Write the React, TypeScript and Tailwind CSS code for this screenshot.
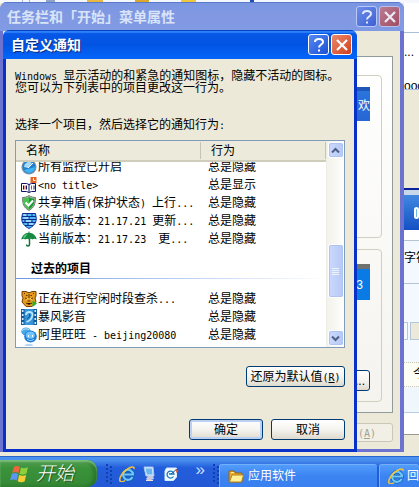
import React from "react";

const cjk = "font-['Liberation_Sans','Noto_Sans_CJK_SC',sans-serif]";

/* Half-width face; a zero line height keeps it from stretching its line. */
const halfWidth = "whitespace-pre font-['DejaVu_Sans_Mono','Liberation_Mono',monospace] text-[10px] leading-[0]";

/* Sets Latin runs in the half-width face beside the full-width Chinese glyphs. */
function Mix({ children }: { children: string }) {
  const parts = children.split(/([\x20-\x7e]+)/).filter(Boolean);
  return (
    <>
      {parts.map((part, i) =>
        /^[\x20-\x7e]+$/.test(part) ? (
          <span key={i} className={halfWidth}>
            {part}
          </span>
        ) : (
          <span key={i}>{part}</span>
        ),
      )}
    </>
  );
}

const svg = "block h-4 w-4 shrink-0";

function MonitorIcon() {
  return (
    <svg viewBox="0 0 16 16" className={svg} aria-hidden="true">
      <circle cx="8" cy="8" r="7.6" fill="#8b949c" />
      <circle cx="8" cy="8" r="6.4" fill="#1f7fd0" />
      <path d="M8 14a6 6 0 0 0 6-6L3 11a6 6 0 0 0 5 3Z" fill="#3fb4f4" />
      <path d="M3 8a5 5 0 0 1 8-4L7 9Z" fill="#a8dcff" />
      <path d="M7 9l5-5" stroke="#fff" />
    </svg>
  );
}

function BookIcon() {
  return (
    <svg viewBox="0 0 16 16" className={svg} aria-hidden="true">
      <path d="M.5 6.500h5l2.500 1 2.500-1h4v8h-4l-2.500 1-2.500-1h-5Z" fill="#fff" stroke="#10106c" />
      <path d="M8 7v8M2.500 8.500v4M5.500 8.500v4M13 8.500v4" stroke="#10106c" />
      <path d="M4 8.500v4M10.500 8.500v4" stroke="#d04020" />
      <path d="M9.500 0h6v6h-6z" fill="#e8641c" />
      <path d="M12.500 1v2.500h2" stroke="#fff" fill="none" />
    </svg>
  );
}

function ShieldIcon() {
  return (
    <svg viewBox="0 0 16 16" className={svg} aria-hidden="true">
      <path d="M8 .5C10 2 12.500 2.500 14.500 2.500c0 6-1 10-6.500 13-5.500-3-6.500-7-6.500-13C3.500 2.500 6 2 8 .5Z" fill="#b4bdb0" stroke="#6b7c68" />
      <path d="M8 2c1.500 1 3.500 1.500 5.500 1.500 0 5.500-1.500 8.500-5.500 11-4-2.500-5.500-5.500-5.500-11C4.500 3.500 6.500 3 8 2Z" fill="#1d9c32" />
      <path d="M8 2v12.500C4 12 2.500 9 2.500 3.500 4.500 3.500 6.500 3 8 2Z" fill="#4cc254" />
      <path d="m4.500 7.500 3 3 4.500-5" stroke="#fff" strokeWidth="2" fill="none" />
    </svg>
  );
}

function BrickShieldIcon() {
  return (
    <svg viewBox="0 0 16 16" className={svg} aria-hidden="true">
      <path d="M1.500.5h13l.8 5c0 5-3.300 8-7.300 10-4-2-7.300-5-7.300-10Z" fill="#50baf6" stroke="#0c2c94" />
      <path d="M1 3.500h14M1 6.500h14M1.500 9.500h13M4 12.500h8M6 .5v3M11 .5v3M8 3.500v3M4 6.500v3M11 6.500v3M7 9.500v3" stroke="#0c2c94" />
      <path d="M2.500 2h3M2.500 5h5M5 8h5M8 11h4" stroke="#e4f6ff" />
    </svg>
  );
}

function UmbrellaIcon() {
  return (
    <svg viewBox="0 0 16 16" className={svg} aria-hidden="true">
      <path d="M.3 8.500C1 4.500 4 2 7.500 1.800V.5h1v1.300C12 2 15 4.500 15.700 8.500c-2-1.200-3-1-4 0-1.500-1-2.500-1-3.700 0-1.200-1-2.200-1-3.700 0-1-1-2-1.200-4 0Z" fill="#178a42" />
      <path d="M2 6.500C3 4 5 3 7 3 5.500 4 4.500 5.500 4 7Z" fill="#65cc7c" />
      <path d="M8.500 8v5.500c0 2-3 2-3 0" stroke="#147038" strokeWidth="1.500" fill="none" />
    </svg>
  );
}

function LeopardIcon() {
  return (
    <svg viewBox="0 0 16 16" className={svg} aria-hidden="true">
      <path d="M1 .5h4l2 1h2l2-1h4V5l-1 2 1 4-4 4.500H5L1 11l1-4-1-2Z" fill="#e49a1c" stroke="#754008" />
      <path d="M5 4.500h1.500M9.500 4.500H11M4 7l2 1M12 7l-2 1M6.500 10h3M5 12l3 1.500 3-1.500M3 2.500h1M12 2.500h1M8 3v4" stroke="#653404" />
      <path d="M5 9.500 7 7M9 7l2 2.500" stroke="#ffe070" />
      <path d="m11.500 9.500 4.500 3-4.500 3.500Z" fill="#28b428" />
    </svg>
  );
}

function FilmIcon() {
  return (
    <svg viewBox="0 0 16 16" className={svg} aria-hidden="true">
      <path d="M0 0h16v16H0z" fill="#135c9c" />
      <path d="M3.500 0h9v16h-9z" fill="#3694d8" />
      <path d="M1.700 1v14M14.300 1v14" stroke="#d4ecff" strokeWidth="1.600" strokeDasharray="2 2" />
      <path d="M5 6c0-4 7-4 6.500 0-.5 4-3 6-6 7" stroke="#b8eaff" strokeWidth="1.800" fill="none" />
      <path d="M8 5c2 1 0 4-2 5" stroke="#0c3c78" fill="none" />
    </svg>
  );
}

function WangWangIcon() {
  return (
    <svg viewBox="0 0 16 16" className={svg} aria-hidden="true">
      <ellipse cx="5" cy="4.500" rx="4.800" ry="4" fill="#4ba8e8" />
      <path d="M1 4c1-2 5-3 7-1" stroke="#c4ecff" fill="none" />
      <ellipse cx="9.500" cy="9.500" rx="6.300" ry="6" fill="#1c7cd8" />
      <ellipse cx="9.300" cy="8.200" rx="4.500" ry="3.600" fill="#70c4fa" />
      <path d="M7.500 8v2M11.500 8v2" stroke="#fff" />
      <path d="M6 12c2 2 5 2 7 0" stroke="#b4e4ff" fill="none" />
    </svg>
  );
}

function ExplorerIcon() {
  return (
    <svg viewBox="0 0 16 16" className={svg} aria-hidden="true">
      <path d="M13.500 11A5 5 0 1 1 14 8.500H5" stroke="#0e59ac" strokeWidth="3.400" fill="none" />
      <path d="M13.500 11A5 5 0 1 1 14 8.500H5" stroke="#6cc8f8" strokeWidth="2.200" fill="none" />
      <path d="M1.500 15.500C-1 13 4 4 12 1.200c2-.7 3.500-.2 3 1.800M1.500 15.500c1 .6 3 0 4.500-1" stroke="#f2c43c" strokeWidth="1.500" fill="none" />
    </svg>
  );
}

function DesktopIcon() {
  return (
    <svg viewBox="0 0 16 16" className={svg} aria-hidden="true">
      <path d="M3 1h9l1 9H5Z" fill="#dcecff" stroke="#a4c8f4" />
      <path d="M4.500 2.500h6.500l.5 6H6Z" fill="#6cb4f0" />
      <path d="M7 10h5l1 3-6 2-2-2Z" fill="#c9c8dc" />
      <path d="M5 14.500h7" stroke="#eee6d4" />
    </svg>
  );
}

function MailIcon() {
  return (
    <svg viewBox="0 0 16 16" className={svg} aria-hidden="true">
      <path d="M3.500 2h10v9l-3 3.500H2V5Z" fill="#f4fbff" stroke="#d4effc" />
      <path d="M10.500 10.500A3.500 3.500 0 1 1 11 8H6" stroke="#1679b8" strokeWidth="1.300" fill="none" />
      <path d="m8 8 6-5" stroke="#2458a0" />
      <path d="m12.500 3 3 2-2 2Z" fill="#e85c24" />
    </svg>
  );
}

function FolderIcon() {
  return (
    <svg viewBox="0 0 16 16" className={svg} aria-hidden="true">
      <path d="M1 3h5l1.500 2H14v9H1Z" fill="#e6aa2c" stroke="#946410" />
      <path d="M4 7h11.500L13.500 14H1.500Z" fill="#fff09a" stroke="#b68220" />
      <path d="M3 4.500h3" stroke="#fff0a4" />
    </svg>
  );
}

function FlagIcon() {
  return (
    <svg viewBox="0 0 20 18" className="block h-[18px] w-5 shrink-0" aria-hidden="true">
      <path d="M4 2c2-1.500 4-1 6 0L8.500 8c-2-1-4-1.500-6.500 0Z" fill="#f0643c" />
      <path d="M11 2.500c2 1 5 1 7-.5l-1.500 6.500c-2 1.500-5 1.500-7 .2Z" fill="#8cd03c" />
      <path d="M1.700 9c2-1.500 4-1.200 6.500 0L6.700 15.500c-2-1.200-4-1.500-6.700 0Z" fill="#5c96f4" />
      <path d="M9.200 9.700c2 1.300 5 1.300 7 0l-1.500 6.500c-2 1.500-5 1.200-7 0Z" fill="#f8cc34" />
    </svg>
  );
}

function HelpButton({ faded = false }: { faded?: boolean }) {
  return (
    <button
      type="button"
      aria-label="帮助"
      className={`flex h-[21px] w-[21px] items-center justify-center rounded-[3px] border ${
        faded
          ? "border-[#b9c8f4] bg-linear-to-br from-[#6e8eea] to-[#3e60d2]"
          : "border-white bg-linear-to-br from-[#5688f4] to-[#1b50d4]"
      }`}
    >
      <svg viewBox="0 0 16 16" className="h-4 w-4" fill="none" stroke={faded ? "#e4eaff" : "#fff"} strokeWidth="2" aria-hidden="true">
        <path d="M4 5c0-4 8-4 8 0 0 2.500-4 2.500-4 5.500M8 12.500v2" />
      </svg>
    </button>
  );
}

function CloseButton({ faded = false }: { faded?: boolean }) {
  return (
    <button
      type="button"
      aria-label="关闭"
      className={`flex h-[21px] w-[21px] items-center justify-center rounded-[3px] border ${
        faded
          ? "border-[#b9c0e8] bg-linear-to-br from-[#bb7c94] to-[#a04c62]"
          : "border-white bg-linear-to-br from-[#ec8a6c] to-[#cf3c14]"
      }`}
    >
      <svg viewBox="0 0 16 16" className="h-4 w-4" stroke={faded ? "#eceaf8" : "#fff"} strokeWidth="2.200" aria-hidden="true">
        <path d="m3 3 10 10M13 3 3 13" />
      </svg>
    </button>
  );
}

const button =
  "h-[21px] rounded-[3px] border border-[#003c74] bg-linear-to-b from-white via-[#f5f4ef] to-[#dedace] text-center leading-[18px]";

function Row({ icon, name, state, clipped = false }: { icon: React.ReactNode; name: string; state: string; clipped?: boolean }) {
  const cell = `flex items-end overflow-hidden ${clipped ? "h-[14px]" : "h-[18px]"}`;
  return (
    <tr>
      <td className="p-0">
        <div className={`${cell} pl-[5px]`}>
          <div className="flex h-[18px] items-center gap-px whitespace-nowrap leading-[18px]">
            {icon}
            <span>
              <Mix>{name}</Mix>
            </span>
          </div>
        </div>
      </td>
      <td className="p-0">
        <div className={`${cell} pl-[7px]`}>
          <span className="h-[18px] leading-[18px]">{state}</span>
        </div>
      </td>
    </tr>
  );
}

function ScrollBar() {
  const knob =
    "flex w-4 items-center justify-center rounded-[3px] border border-white bg-linear-to-r from-[#cbd9fd] to-[#b5c8f5] outline-1 -outline-offset-2 outline-[#b0c4f0]";
  return (
    <div className="flex w-[18px] shrink-0 flex-col items-center border-l border-[#eeede5] bg-linear-to-r from-[#f3f2ec] to-[#fefefb] py-px">
      <button type="button" aria-label="向上滚动" className={`${knob} h-4`}>
        <svg viewBox="0 0 9 7" className="h-[7px] w-[9px]" fill="none" stroke="#4d6185" strokeWidth="2" aria-hidden="true">
          <path d="m1 5.500 3.500-3.500L8 5.500" />
        </svg>
      </button>
      <div className="flex-1" />
      <div className={`${knob} h-[54px] flex-col gap-px`}>
        <i className="h-px w-[7px] bg-[#eef4fe]" />
        <i className="h-px w-[7px] bg-[#eef4fe]" />
        <i className="h-px w-[7px] bg-[#eef4fe]" />
        <i className="h-px w-[7px] bg-[#eef4fe]" />
      </div>
      <div className="h-8" />
      <button type="button" aria-label="向下滚动" className={`${knob} h-4`}>
        <svg viewBox="0 0 9 7" className="h-[7px] w-[9px]" fill="none" stroke="#4d6185" strokeWidth="2" aria-hidden="true">
          <path d="m1 1.500 3.500 3.500L8 1.500" />
        </svg>
      </button>
    </div>
  );
}

function NotificationList() {
  return (
    <div className="mt-[9px] flex h-[208px] overflow-hidden border border-[#7f9db9] bg-white">
      <div className="min-w-0 flex-1">
        <table className="w-full table-fixed border-separate border-spacing-0 text-left">
          <colgroup>
            <col className="w-[185px]" />
            <col />
          </colgroup>
          <thead>
            <tr className="h-[21px] bg-[#ebeadb] leading-[18px]">
              <th className="border-b-2 border-[#d0cdbb] p-0 font-normal">
                <div className="my-px h-[17px] border-r border-[#c7c5b2] pl-[10px]">名称</div>
              </th>
              <th className="border-b-2 border-[#d0cdbb] p-0 font-normal">
                <div className="my-px h-[17px] border-r border-[#c7c5b2] pl-[10px]">行为</div>
              </th>
            </tr>
          </thead>
          <tbody>
            <Row clipped icon={<MonitorIcon />} name="所有监控已开启" state="总是隐藏" />
            <Row icon={<BookIcon />} name="<no title>" state="总是显示" />
            <Row icon={<ShieldIcon />} name="共享神盾(保护状态) 上行..." state="总是隐藏" />
            <Row icon={<BrickShieldIcon />} name="当前版本：21.17.21 更新..." state="总是隐藏" />
            <Row icon={<UmbrellaIcon />} name="当前版本：21.17.23  更..." state="总是隐藏" />
            <tr>
              <th colSpan={2} className="p-0 pt-[13px] pb-[11px] font-bold">
                <div className="h-[17px] pl-[15px] leading-[17px]">过去的项目</div>
                <div className="h-px bg-linear-to-r from-[#7098e0] to-white" />
              </th>
            </tr>
            <Row icon={<LeopardIcon />} name="正在进行空闲时段查杀..." state="总是隐藏" />
            <Row icon={<FilmIcon />} name="暴风影音" state="总是隐藏" />
            <Row icon={<WangWangIcon />} name="阿里旺旺 - beijing20080" state="总是隐藏" />
          </tbody>
        </table>
        <div className="ml-[9px] h-[2px] w-2 rounded-t-full bg-[#b5d6f4]" />
      </div>
      <ScrollBar />
    </div>
  );
}

function NotificationDialog() {
  return (
    <section
      role="dialog"
      aria-label="自定义通知"
      className="absolute top-[30px] left-[3px] w-[354px] overflow-hidden rounded-t-[7px] bg-[#0831c8]"
    >
      <header className="flex h-[29px] items-center gap-[2px] bg-linear-to-b from-[#0a58e8] via-[#0254e2] to-[#0466fb] pr-[5px] pl-2 shadow-[inset_0_1px_0_#0842c0,inset_0_3px_1px_#2c80fa]">
        <h1 className="flex-1 text-[14px] leading-[20px] font-bold text-white [text-shadow:1px_1px_0_#0a2a80]">自定义通知</h1>
        <HelpButton />
        <CloseButton />
      </header>
      <div className="mx-[3px] mb-[3px] bg-[#ece9d8] pt-[11px] pr-[9px] pb-[9px] pl-[9px]">
        <p className="leading-[12px] whitespace-nowrap">
          <Mix>Windows 显示活动的和紧急的通知图标，隐藏不活动的图标。</Mix>
          <br />
          您可以为下列表中的项目更改这一行为。
        </p>
        <p className="mt-[25px] leading-[12px]">
          <Mix>选择一个项目，然后选择它的通知行为:</Mix>
        </p>
        <NotificationList />
        <div className="mt-[18px] flex justify-end">
          <button type="button" className={`${button} w-[99px]`}>
            还原为默认值
            <span className={halfWidth}>
              (<u>R</u>)
            </span>
          </button>
        </div>
        <div className="mt-8 flex justify-end gap-2">
          <button type="button" className={`${button} w-[74px] shadow-[inset_0_0_0_2px_#bcd0f4]`}>
            确定
          </button>
          <button type="button" className={`${button} w-[74px]`}>
            取消
          </button>
        </div>
      </div>
    </section>
  );
}

function PropertiesWindow() {
  return (
    <section
      aria-label="任务栏和「开始」菜单属性"
      className="absolute top-[2px] left-0 w-[404px] overflow-hidden rounded-t-[7px] bg-[#6b72cf]"
    >
      <header className="flex h-[29px] items-center gap-[2px] bg-linear-to-b from-[#7a96e2] via-[#8299e2] to-[#809ae4] pr-1 pl-[7px] shadow-[inset_0_1px_0_#5c78c8]">
        <h2 className="flex-1 text-[14px] leading-[20px] font-bold text-[#d8e4f8]">任务栏和「开始」菜单属性</h2>
        <HelpButton faded />
        <CloseButton faded />
      </header>
      <div className="mr-1 mb-[3px] ml-[3px] flex flex-col items-end bg-[#ece9d8] pt-[25px] pr-[7px] pb-[7px]">
        <div className="flex h-[357px] w-full flex-col gap-[11px] border border-[#919b9c] bg-linear-to-b from-white to-[#f4f3ee] pt-[18px] pr-[10px]">
          <div className="flex h-[163px] flex-col items-end rounded-[4px] border border-[#d0d0bf] pt-[11px] pr-[11px]">
            <div className="flex h-[34px] w-12 items-center justify-end border-t-4 border-[#1d58b8] bg-linear-to-b from-[#2a74dc] to-[#2766d4] text-white">
              欢
            </div>
          </div>
          <div className="flex h-[153px] flex-col items-end rounded-[4px] border border-[#d0d0bf] pt-[14px] pr-[11px]">
            <div className="flex h-9 w-12 items-center justify-end border-t-[5px] border-[#6f716f] bg-[#0a7be4] pr-[7px] text-[12px] text-white">
              3
            </div>
            <button type="button" aria-label="自定义" className={`${button} mt-[70px] w-20 pr-[4px] text-right`}>
              ...
            </button>
          </div>
        </div>
        <button
          type="button"
          disabled
          aria-label="应用"
          className="mt-[10px] h-[19px] w-[75px] rounded-[3px] border border-[#c9c7ba] bg-[#f2f0e6] pr-4 text-right leading-[16px] whitespace-nowrap text-[#a1a192]"
        >
          <span className={halfWidth}>
            (<u>A</u>)
          </span>
        </button>
      </div>
    </section>
  );
}

function BackWindows() {
  return (
    <div className="absolute inset-0 flex flex-col bg-[#ece9d8] pl-[404px] whitespace-nowrap">
      <div className="h-8 shrink-0 bg-white" />
      <div className="flex h-[58px] shrink-0 flex-col justify-between border-t border-b border-[#a9bfdc] bg-white pt-3 leading-[15px]">
        <span>...</span>
        <span className="h-[6px] overflow-hidden leading-[6px]">ooo</span>
      </div>
      <div className="h-[100px] shrink-0 border-b-2 border-[#08219c]" />
      <div className="flex h-[40px] shrink-0 items-center border-t-[5px] border-[#c9d8e8] bg-linear-to-b from-[#4288e0] to-[#1450c4] pl-[10px]">
        <span className="h-3 w-3 rounded-full border-2 border-white bg-[#68b8ec]" />
      </div>
      <div className="h-[10px] shrink-0 bg-white" />
      <div className="h-[44px] shrink-0 border-t border-b border-[#b4c5d4] bg-[#f3f9fe] pt-[10px] leading-[14px]">字符</div>
      <div className="flex h-[79px] shrink-0 gap-[2px] border-b border-dotted border-[#c9c8b8] bg-[#f3f9fe] pt-[38px]">
        <span className="h-[18px] w-1 border border-l-0 border-[#b4c8dc]" />
        <span className="h-[18px] flex-1 border border-r-0 border-[#b4c8dc] bg-[#ece9d8]" />
      </div>
      <div className="h-[24px] shrink-0 border-b border-dotted border-[#c9c8b8] bg-[#fcfdf4] pl-[9px] leading-[22px]">今</div>
      <div className="h-[26px] shrink-0 border-b border-[#b9cee4] bg-[#eff7fd]" />
      <div className="h-[22px] shrink-0 border-b border-[#9c9a8e] bg-white" />
    </div>
  );
}

function TopEdge() {
  return (
    <div className="absolute inset-x-0 top-0 flex h-[3px] bg-[#f4f8fd] pr-[160px] pl-[22px]">
      <span className="w-2 border-x border-[#a8b4d0]" />
      <span className="ml-4 w-[9px] bg-[#90a4c8]" />
      <span className="ml-8 w-[16px] bg-[#e8b840]" />
      <span className="ml-8 w-[14px] bg-[#dca82c]" />
      <span className="ml-8 w-[15px] bg-[#f0c840]" />
      <span className="ml-[54px] w-1 bg-[#1c4cb4]" />
    </div>
  );
}

function Grip() {
  return (
    <span className="flex gap-[2px]" aria-hidden="true">
      <i className="h-[18px] border-l-2 border-dotted border-[#123fae]" />
      <i className="mt-[2px] h-[18px] border-l-2 border-dotted border-[#123fae]" />
    </span>
  );
}

function Taskbar() {
  const task =
    "flex items-center rounded-t-[3px] border-t border-l border-[#72b0fc] bg-linear-to-b from-[#529cfa] via-[#3c84f2] to-[#3a80f0] text-white";
  return (
    <nav
      aria-label="任务栏"
      className="absolute inset-x-0 bottom-0 flex h-[31px] overflow-hidden border-t border-[#2865cc] bg-linear-to-b from-[#4a90ee] from-10% via-[#245edc] via-35% to-[#2258d4]"
    >
      <button
        type="button"
        className="mt-[3px] flex w-[97px] shrink-0 items-center gap-[6px] rounded-r-[10px] bg-linear-to-b from-[#56a055] via-[#3a923a] via-30% to-[#358a35] pl-[10px] shadow-[inset_0_2px_2px_#7cc07c,inset_-3px_0_4px_#256c28]"
      >
        <FlagIcon />
        <span className="text-[19px] leading-[24px] font-light whitespace-nowrap text-white italic [text-shadow:1px_1px_1px_#204c20]">开始</span>
      </button>
      <div className="mt-1 flex w-[122px] shrink-0 items-center pl-[9px]">
        <Grip />
        <div className="flex flex-1 items-center gap-[6px] pl-[7px]">
          <ExplorerIcon />
          <DesktopIcon />
          <MailIcon />
        </div>
        <span className="mb-2 pr-2 text-[17px] leading-[12px] text-[#c8e0ff]">»</span>
        <Grip />
      </div>
      <button type="button" className={`${task} mt-[7px] w-[158px] shrink-0 gap-1 pl-2`}>
        <FolderIcon />
        应用软件
      </button>
      <button type="button" className={`${task} mt-[7px] ml-[2px] min-w-0 flex-1 gap-[3px] overflow-hidden pl-2 whitespace-nowrap`}>
        <ExplorerIcon />
        回
      </button>
    </nav>
  );
}

export default function App() {
  return (
    <main className={`relative h-screen min-h-[487px] w-full overflow-hidden text-[12px] leading-[16px] text-black ${cjk}`}>
      <BackWindows />
      <TopEdge />
      <PropertiesWindow />
      <NotificationDialog />
      <Taskbar />
    </main>
  );
}
